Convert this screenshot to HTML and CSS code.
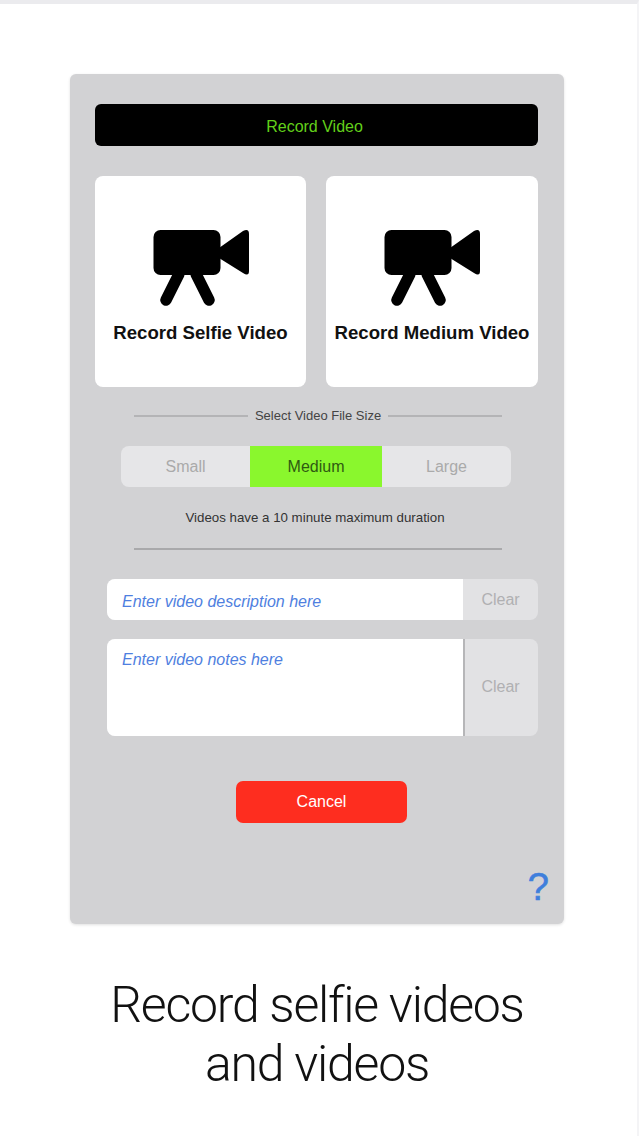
FILE: index.html
```html
<!DOCTYPE html>
<html lang="en">
<head>
    <meta charset="UTF-8">
    <meta name="viewport" content="width=device-width, initial-scale=1.0">
    <title>Record Video</title>
    <link rel="stylesheet" href="styles.css">
</head>
<body>
    <div class="page">
        <div class="panel">
            <div class="title-bar">Record Video</div>

            <div class="cards">
                <button class="card">
                    <svg class="camera" viewBox="0 0 96 76">
                        <rect x="0.5" y="0" width="67" height="45" rx="7"/>
                        <path d="M66 18 L90 1 Q96 -2 96 4 V41 Q96 47 90 43 L66 28 Z"/>
                        <path class="legs" d="M26 44 L13 70 M43 44 L56 70"/>
                    </svg>
                    <span>Record Selfie Video</span>
                </button>
                <button class="card">
                    <svg class="camera" viewBox="0 0 96 76">
                        <rect x="0.5" y="0" width="67" height="45" rx="7"/>
                        <path d="M66 18 L90 1 Q96 -2 96 4 V41 Q96 47 90 43 L66 28 Z"/>
                        <path class="legs" d="M26 44 L13 70 M43 44 L56 70"/>
                    </svg>
                    <span>Record Medium Video</span>
                </button>
            </div>

            <div class="size-label"><span>Select Video File Size</span></div>

            <div class="segments">
                <div class="segment segment-small">Small</div>
                <div class="segment segment-medium">Medium</div>
                <div class="segment segment-large">Large</div>
            </div>

            <p class="note">Videos have a 10 minute maximum duration</p>
            <div class="rule"></div>

            <div class="field field-desc">
                <div class="field-text">Enter video description here</div>
                <div class="field-clear">Clear</div>
            </div>
            <div class="field field-notes">
                <div class="field-text">Enter video notes here</div>
                <div class="field-clear">Clear</div>
            </div>

            <button class="cancel">Cancel</button>
            <div class="help">?</div>
        </div>

        <h1 class="caption">Record selfie videos<br>and videos</h1>
    </div>
</body>
</html>
```

FILE: styles.css
```css
body {
    font-family: "Liberation Sans", Arial, sans-serif;
    background-color: #fff;
    margin: 0;
}

.page {
    height: 1136px;
    border-top: 4px solid #ebebee;
    border-right: 2px solid #f4f4f6;
    padding-top: 70px;
    box-sizing: border-box;
    overflow: hidden;
}

.panel {
    width: 494px;
    height: 850px;
    margin-left: 70px;
    padding: 30px 26px 0 25px;
    box-sizing: border-box;
    background: #d2d2d4;
    border-radius: 6px;
    box-shadow: 0px 1px 3px rgba(0, 0, 0, 0.12);
}

.title-bar {
    height: 42px;
    line-height: 45px;
    background: #000;
    color: #62d01a;
    font-size: 16px;
    text-align: center;
    padding-right: 4px;
    border-radius: 6px;
}

.cards {
    display: grid;
    grid-template-columns: 211px 212px;
    gap: 20px;
    margin-top: 30px;
}

.card {
    height: 211px;
    padding: 54px 0 0;
    background: #fff;
    border: none;
    border-radius: 8px;
    display: flex;
    flex-direction: column;
    align-items: center;
    font-family: inherit;
    color: #111;
}

.card span {
    font-size: 18.6px;
    font-weight: bold;
    margin-top: 16px;
    white-space: nowrap;
}

.camera {
    width: 96px;
    height: 76px;
    fill: #000;
    overflow: visible;
}

.camera .legs {
    fill: none;
    stroke: #000;
    stroke-width: 11.5;
    stroke-linecap: round;
}

.size-label {
    display: flex;
    align-items: center;
    gap: 7px;
    margin: 21px 36px 0 39px;
    font-size: 13px;
    color: #444;
    line-height: 16px;
}

.size-label::before,
.size-label::after {
    content: "";
    flex: 1;
    height: 2px;
    background: #b4b4b6;
}

.segments {
    display: flex;
    margin: 22px 27px 0 26px;
    height: 41px;
    background: #e6e6e8;
    border-radius: 8px;
    font-size: 16px;
    line-height: 42px;
    text-align: center;
    color: #aaa;
}

.segment-small {
    width: 129px;
}

.segment-medium {
    width: 132px;
    background: #8af72d;
    color: #2f5a12;
}

.segment-large {
    flex: 1;
}

.note {
    margin: 23px 0 0;
    font-size: 13.3px;
    line-height: 16px;
    text-align: center;
    color: #333;
    padding-right: 3px;
}

.rule {
    height: 2px;
    margin: 22px 36px 0 39px;
    background: #a9a9ab;
}

.field {
    display: flex;
    margin-left: 12px;
    border-radius: 8px;
    overflow: hidden;
    background: #e2e2e4;
    color: #b0b0b2;
    font-size: 16px;
}

.field-desc {
    height: 41px;
    margin-top: 29px;
}

.field-notes {
    height: 97px;
    margin-top: 19px;
}

.field-text {
    width: 341px;
    padding: 14px 0 0 15px;
    background: #fff;
    color: #4f7fe0;
    font-style: italic;
    line-height: 18px;
}

.field-notes .field-text {
    padding-top: 12px;
    border-right: 2px solid #b6b6b8;
}

.field-clear {
    flex: 1;
    display: flex;
    align-items: center;
    justify-content: center;
}

.field-notes .field-clear {
    padding: 0 2px 2px 0;
}

.cancel {
    display: block;
    width: 171px;
    height: 42px;
    margin: 45px 0 0 141px;
    padding: 0;
    border: none;
    border-radius: 7px;
    background: #fe2d1f;
    color: #fff;
    font-family: inherit;
    font-size: 16px;
}

.help {
    margin: 42px -11px 0 0;
    text-align: right;
    color: #3f7fdc;
    font-size: 38px;
    line-height: 44px;
    -webkit-text-stroke: 0.6px #3f7fdc;
}

.caption {
    margin: 52px 0 0;
    padding-right: 3px;
    font-family: Roboto, "Liberation Sans", sans-serif;
    font-weight: 300;
    font-size: 50px;
    letter-spacing: -1.25px;
    line-height: 59px;
    text-align: center;
    color: #111;
}
```
